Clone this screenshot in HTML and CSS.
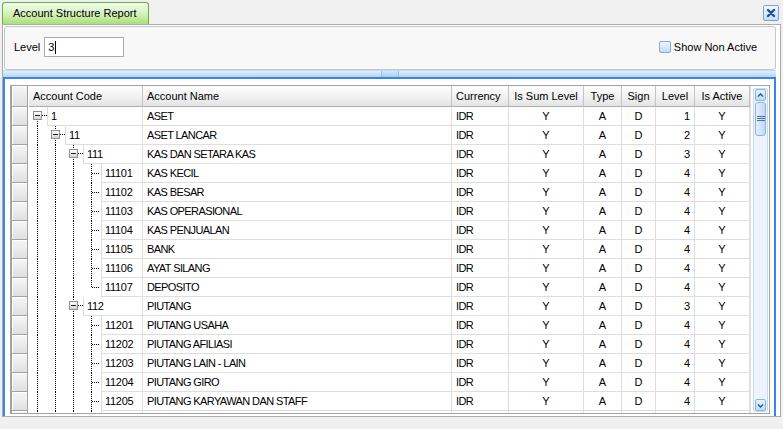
FILE: index.html
```html
<!DOCTYPE html>
<html lang="en">
<head>
  <meta charset="UTF-8" />
  <title>Account Structure Report</title>
  <link rel="stylesheet" href="styles.css">
</head>
<body>

  <div class="tabstrip">
    <div class="tab">Account Structure Report</div>
    <div class="close">
      <svg width="10" height="10" viewBox="0 0 10 10"><path d="M2 2 L8 8 M8 2 L2 8" stroke="#1d4f93" stroke-width="2.4" stroke-linecap="round"/></svg>
    </div>
  </div>

  <div class="frame">
    <div class="filter">
      <span class="lbl">Level</span>
      <div class="input">3<span class="caret"></span></div>
      <label class="chk"><span class="box"></span>Show Non Active</label>
    </div>

    <div class="splitter"><span class="grip"></span></div>

    <div class="panel">
      <div class="grid">
        <div class="table">
          <div class="row head">
            <span class="sel"></span>
            <span class="hc">Account Code</span>
            <span class="hc">Account Name</span>
            <span class="hc">Currency</span>
            <span class="hc ctr">Is Sum Level</span>
            <span class="hc ctr">Type</span>
            <span class="hc ctr">Sign</span>
            <span class="hc ctr">Level</span>
            <span class="hc ctr">Is Active</span>
          </div>

          <div class="row">
            <span class="sel"></span>
            <span class="code"><span class="nd exp first"><i class="bx"></i></span><span class="ct">1</span></span>
            <span class="c">ASET</span><span class="c">IDR</span><span class="c ctr">Y</span><span class="c ctr">A</span><span class="c ctr">D</span><span class="c rt">1</span><span class="c ctr">Y</span>
          </div>
          <div class="row">
            <span class="sel"></span>
            <span class="code"><span class="tl"></span><span class="nd exp"><i class="bx"></i></span><span class="ct">11</span></span>
            <span class="c">ASET LANCAR</span><span class="c">IDR</span><span class="c ctr">Y</span><span class="c ctr">A</span><span class="c ctr">D</span><span class="c rt">2</span><span class="c ctr">Y</span>
          </div>
          <div class="row">
            <span class="sel"></span>
            <span class="code"><span class="tl"></span><span class="tl"></span><span class="nd exp"><i class="bx"></i></span><span class="ct">111</span></span>
            <span class="c">KAS DAN SETARA KAS</span><span class="c">IDR</span><span class="c ctr">Y</span><span class="c ctr">A</span><span class="c ctr">D</span><span class="c rt">3</span><span class="c ctr">Y</span>
          </div>
          <div class="row">
            <span class="sel"></span>
            <span class="code"><span class="tl"></span><span class="tl"></span><span class="tl"></span><span class="nd leaf"></span><span class="ct">11101</span></span>
            <span class="c">KAS KECIL</span><span class="c">IDR</span><span class="c ctr">Y</span><span class="c ctr">A</span><span class="c ctr">D</span><span class="c rt">4</span><span class="c ctr">Y</span>
          </div>
          <div class="row">
            <span class="sel"></span>
            <span class="code"><span class="tl"></span><span class="tl"></span><span class="tl"></span><span class="nd leaf"></span><span class="ct">11102</span></span>
            <span class="c">KAS BESAR</span><span class="c">IDR</span><span class="c ctr">Y</span><span class="c ctr">A</span><span class="c ctr">D</span><span class="c rt">4</span><span class="c ctr">Y</span>
          </div>
          <div class="row">
            <span class="sel"></span>
            <span class="code"><span class="tl"></span><span class="tl"></span><span class="tl"></span><span class="nd leaf"></span><span class="ct">11103</span></span>
            <span class="c">KAS OPERASIONAL</span><span class="c">IDR</span><span class="c ctr">Y</span><span class="c ctr">A</span><span class="c ctr">D</span><span class="c rt">4</span><span class="c ctr">Y</span>
          </div>
          <div class="row">
            <span class="sel"></span>
            <span class="code"><span class="tl"></span><span class="tl"></span><span class="tl"></span><span class="nd leaf"></span><span class="ct">11104</span></span>
            <span class="c">KAS PENJUALAN</span><span class="c">IDR</span><span class="c ctr">Y</span><span class="c ctr">A</span><span class="c ctr">D</span><span class="c rt">4</span><span class="c ctr">Y</span>
          </div>
          <div class="row">
            <span class="sel"></span>
            <span class="code"><span class="tl"></span><span class="tl"></span><span class="tl"></span><span class="nd leaf"></span><span class="ct">11105</span></span>
            <span class="c">BANK</span><span class="c">IDR</span><span class="c ctr">Y</span><span class="c ctr">A</span><span class="c ctr">D</span><span class="c rt">4</span><span class="c ctr">Y</span>
          </div>
          <div class="row">
            <span class="sel"></span>
            <span class="code"><span class="tl"></span><span class="tl"></span><span class="tl"></span><span class="nd leaf"></span><span class="ct">11106</span></span>
            <span class="c">AYAT SILANG</span><span class="c">IDR</span><span class="c ctr">Y</span><span class="c ctr">A</span><span class="c ctr">D</span><span class="c rt">4</span><span class="c ctr">Y</span>
          </div>
          <div class="row">
            <span class="sel"></span>
            <span class="code"><span class="tl"></span><span class="tl"></span><span class="tl"></span><span class="nd leaf last"></span><span class="ct">11107</span></span>
            <span class="c">DEPOSITO</span><span class="c">IDR</span><span class="c ctr">Y</span><span class="c ctr">A</span><span class="c ctr">D</span><span class="c rt">4</span><span class="c ctr">Y</span>
          </div>
          <div class="row">
            <span class="sel"></span>
            <span class="code"><span class="tl"></span><span class="tl"></span><span class="nd exp"><i class="bx"></i></span><span class="ct">112</span></span>
            <span class="c">PIUTANG</span><span class="c">IDR</span><span class="c ctr">Y</span><span class="c ctr">A</span><span class="c ctr">D</span><span class="c rt">3</span><span class="c ctr">Y</span>
          </div>
          <div class="row">
            <span class="sel"></span>
            <span class="code"><span class="tl"></span><span class="tl"></span><span class="tl"></span><span class="nd leaf"></span><span class="ct">11201</span></span>
            <span class="c">PIUTANG USAHA</span><span class="c">IDR</span><span class="c ctr">Y</span><span class="c ctr">A</span><span class="c ctr">D</span><span class="c rt">4</span><span class="c ctr">Y</span>
          </div>
          <div class="row">
            <span class="sel"></span>
            <span class="code"><span class="tl"></span><span class="tl"></span><span class="tl"></span><span class="nd leaf"></span><span class="ct">11202</span></span>
            <span class="c">PIUTANG AFILIASI</span><span class="c">IDR</span><span class="c ctr">Y</span><span class="c ctr">A</span><span class="c ctr">D</span><span class="c rt">4</span><span class="c ctr">Y</span>
          </div>
          <div class="row">
            <span class="sel"></span>
            <span class="code"><span class="tl"></span><span class="tl"></span><span class="tl"></span><span class="nd leaf"></span><span class="ct">11203</span></span>
            <span class="c">PIUTANG LAIN - LAIN</span><span class="c">IDR</span><span class="c ctr">Y</span><span class="c ctr">A</span><span class="c ctr">D</span><span class="c rt">4</span><span class="c ctr">Y</span>
          </div>
          <div class="row">
            <span class="sel"></span>
            <span class="code"><span class="tl"></span><span class="tl"></span><span class="tl"></span><span class="nd leaf"></span><span class="ct">11204</span></span>
            <span class="c">PIUTANG GIRO</span><span class="c">IDR</span><span class="c ctr">Y</span><span class="c ctr">A</span><span class="c ctr">D</span><span class="c rt">4</span><span class="c ctr">Y</span>
          </div>
          <div class="row">
            <span class="sel"></span>
            <span class="code"><span class="tl"></span><span class="tl"></span><span class="tl"></span><span class="nd leaf"></span><span class="ct">11205</span></span>
            <span class="c">PIUTANG KARYAWAN DAN STAFF</span><span class="c">IDR</span><span class="c ctr">Y</span><span class="c ctr">A</span><span class="c ctr">D</span><span class="c rt">4</span><span class="c ctr">Y</span>
          </div>
          <div class="row">
            <span class="sel"></span>
            <span class="code"><span class="tl"></span><span class="tl"></span><span class="tl"></span><span class="nd leaf"></span><span class="ct"></span></span>
            <span class="c"></span><span class="c"></span><span class="c"></span><span class="c"></span><span class="c"></span><span class="c"></span><span class="c"></span>
          </div>
        </div>

        <div class="vscroll">
          <div class="track">
            <div class="sbtn"><svg width="12" height="9" viewBox="0 0 12 9"><polyline points="2.5,6 6,2.5 9.5,6" fill="none" stroke="#1f4f8e" stroke-width="1.7"/></svg></div>
            <div class="thumb"><svg width="8" height="6" viewBox="0 0 8 6"><path d="M0 0.5 H8 M0 2.5 H8 M0 4.5 H8" stroke="#4a72a8" stroke-width="1"/></svg></div>
            <div class="space"></div>
            <div class="sbtn"><svg width="12" height="9" viewBox="0 0 12 9"><polyline points="2.5,3 6,6.5 9.5,3" fill="none" stroke="#1f4f8e" stroke-width="1.7"/></svg></div>
          </div>
        </div>
      </div>
    </div>
  </div>

</body>
</html>
```

FILE: styles.css
```css
:root {
  --vd: repeating-linear-gradient(180deg, #000 0 1px, transparent 1px 2px);
  --hd: repeating-linear-gradient(90deg, #000 0 1px, transparent 1px 2px);
}

body {
  margin: 0;
  width: 783px;
  height: 429px;
  overflow: hidden;
  background: #f0f0f0;
  font-family: "Liberation Sans", Arial, sans-serif;
  font-size: 11px;
  color: #000;
}

/* tab bar */
.tabstrip {
  display: flex;
  height: 24px;
}

.tab {
  margin: 2px 0 0 2px;
  width: 147px;
  height: 22px;
  box-sizing: border-box;
  border: 1px solid #62b440;
  border-bottom: 0;
  border-radius: 3px 3px 0 0;
  background: linear-gradient(#f3fbec, #d2f0b6 55%, #a9e07a);
  padding-left: 10px;
  line-height: 21px;
}

.close {
  margin: 5px 4px 0 auto;
  width: 16px;
  height: 16px;
  box-sizing: border-box;
  border: 1px solid #79a4d8;
  border-radius: 2px;
  background: linear-gradient(#f4f9fe, #c6dcf5);
  display: flex;
  align-items: center;
  justify-content: center;
}

/* main frame */
.frame {
  margin-left: 2px;
  width: 779px;
  height: 393px;
  box-sizing: border-box;
  border: 1px solid #adadad;
  background: #fff;
}

.filter {
  margin: 1px 4px 0 1px;
  height: 44px;
  box-sizing: border-box;
  border: 1px solid #c6c6c6;
  border-radius: 3px;
  background: #f8f8f8;
  display: flex;
  align-items: flex-start;
  padding: 10px 18px 0 9px;
}

.lbl {
  line-height: 20px;
}

.input {
  margin-left: 4px;
  width: 80px;
  height: 20px;
  box-sizing: border-box;
  border: 1px solid #a4a9b2;
  background: #fff;
  padding-left: 3px;
  display: flex;
  align-items: center;
}

.caret {
  width: 1px;
  height: 13px;
  background: #000;
  margin-left: 1px;
}

.chk {
  margin-left: auto;
  display: flex;
  align-items: center;
  gap: 3px;
  height: 20px;
}

.box {
  width: 12px;
  height: 12px;
  box-sizing: border-box;
  border: 1px solid #8aa7cc;
  border-radius: 2px;
  background: linear-gradient(#eef5fd, #c4dbf4);
  margin-top: -1px;
}

.splitter {
  margin-right: 4px;
  height: 7px;
  box-sizing: border-box;
  border-top: 1px solid #c4dbf5;
  background: linear-gradient(#e3effc, #b5d3f4);
  display: flex;
  justify-content: center;
}

.grip {
  width: 16px;
  border-left: 1px solid #94bce9;
  border-right: 1px solid #94bce9;
  background: linear-gradient(#d3e7fc, #a6cbf3);
}

.panel {
  margin-right: 4px;
  height: 339px;
  box-sizing: border-box;
  border: 2px solid #3388e4;
  border-bottom: 0;
  padding: 6px 4px 2px 5px;
}

/* grid */
.grid {
  display: flex;
  height: 329px;
  box-sizing: border-box;
  border: 1px solid #a3a3a3;
  background: #fff;
  overflow: hidden;
}

.table {
  width: 739px;
  flex: none;
  overflow: hidden;
}

.row {
  display: grid;
  grid-template-columns: 18px 114px 309px 57px 75px 38px 34px 39px 55px;
  height: 19px;
}

.row.head {
  height: 21px;
}

.sel {
  margin-right: 1px;
  box-sizing: border-box;
  border-left: 1px solid #a2a2a2;
  border-right: 1px solid #a2a2a2;
  border-bottom: 1px solid #a2a2a2;
  background: linear-gradient(#f6f6f6, #e0e0e0);
  box-shadow: inset 1px 1px 0 #fff;
}

.hc {
  box-sizing: border-box;
  border-right: 1px solid #c3c3c3;
  border-bottom: 1px solid #acacac;
  background: linear-gradient(#fefefe, #f2f2f2 50%, #e4e4e4);
  padding: 0 4px;
  line-height: 20px;
  white-space: nowrap;
  overflow: hidden;
}

.hc.ctr {
  text-align: center;
  padding: 0;
}

.c {
  box-sizing: border-box;
  border-right: 1px solid #dedede;
  border-bottom: 1px solid #dedede;
  padding: 0 4px;
  line-height: 18px;
  white-space: nowrap;
  overflow: hidden;
  letter-spacing: -0.6px;
}

.c.ctr {
  text-align: center;
  padding: 0;
  letter-spacing: 0;
}

.c.rt {
  text-align: right;
  letter-spacing: 0;
}

/* tree column */
.code {
  display: flex;
  box-sizing: border-box;
  border-right: 1px solid #dedede;
}

.ct {
  flex: 1;
  box-sizing: border-box;
  border-left: 1px solid #dedede;
  border-bottom: 1px solid #dedede;
  padding-left: 3px;
  line-height: 18px;
  letter-spacing: -0.3px;
  white-space: nowrap;
}

.tl {
  width: 18px;
  flex: none;
  background: var(--vd) 8px 0 / 1px 100% no-repeat;
}

.nd {
  width: 18px;
  flex: none;
  box-sizing: border-box;
  padding: 4px 0 0 4px;
  background-repeat: no-repeat;
}

.nd.exp {
  background-image: var(--hd), var(--vd);
  background-position: 13px 8px, 8px 0;
  background-size: 5px 1px, 1px 100%;
}

.nd.exp.first {
  background-position: 13px 8px, 8px 8px;
}

.nd.leaf {
  background-image: var(--hd), var(--vd);
  background-position: 9px 9px, 8px 0;
  background-size: 8px 1px, 1px 100%;
}

.nd.leaf.last {
  background-size: 8px 1px, 1px 10px;
}

.bx {
  display: block;
  width: 9px;
  height: 9px;
  box-sizing: border-box;
  border: 1px solid #8e8f8f;
  background: linear-gradient(#222, #222) center / 5px 1px no-repeat, linear-gradient(#fff, #d4d4d4);
}

/* scrollbar */
.vscroll {
  width: 19px;
  box-sizing: border-box;
  border-left: 1px solid #dedede;
  padding: 2px 1px 1px 2px;
}

.track {
  height: 100%;
  box-sizing: border-box;
  border: 1px solid #c8daef;
  border-radius: 2px;
  background: #eef4fb;
  display: flex;
  flex-direction: column;
  padding: 0 1px;
}

.sbtn {
  height: 12px;
  box-sizing: border-box;
  border: 1px solid #8db3e2;
  border-radius: 2px;
  background: linear-gradient(#e6f1fd, #c1daf6);
  display: flex;
  align-items: center;
  justify-content: center;
}

.thumb {
  height: 34px;
  box-sizing: border-box;
  border: 1px solid #8db3e2;
  border-radius: 3px;
  background: linear-gradient(90deg, #e4f0fd, #c0d9f6);
  display: flex;
  align-items: center;
  justify-content: center;
  margin-top: 1px;
}

.space {
  flex: 1;
}
```
